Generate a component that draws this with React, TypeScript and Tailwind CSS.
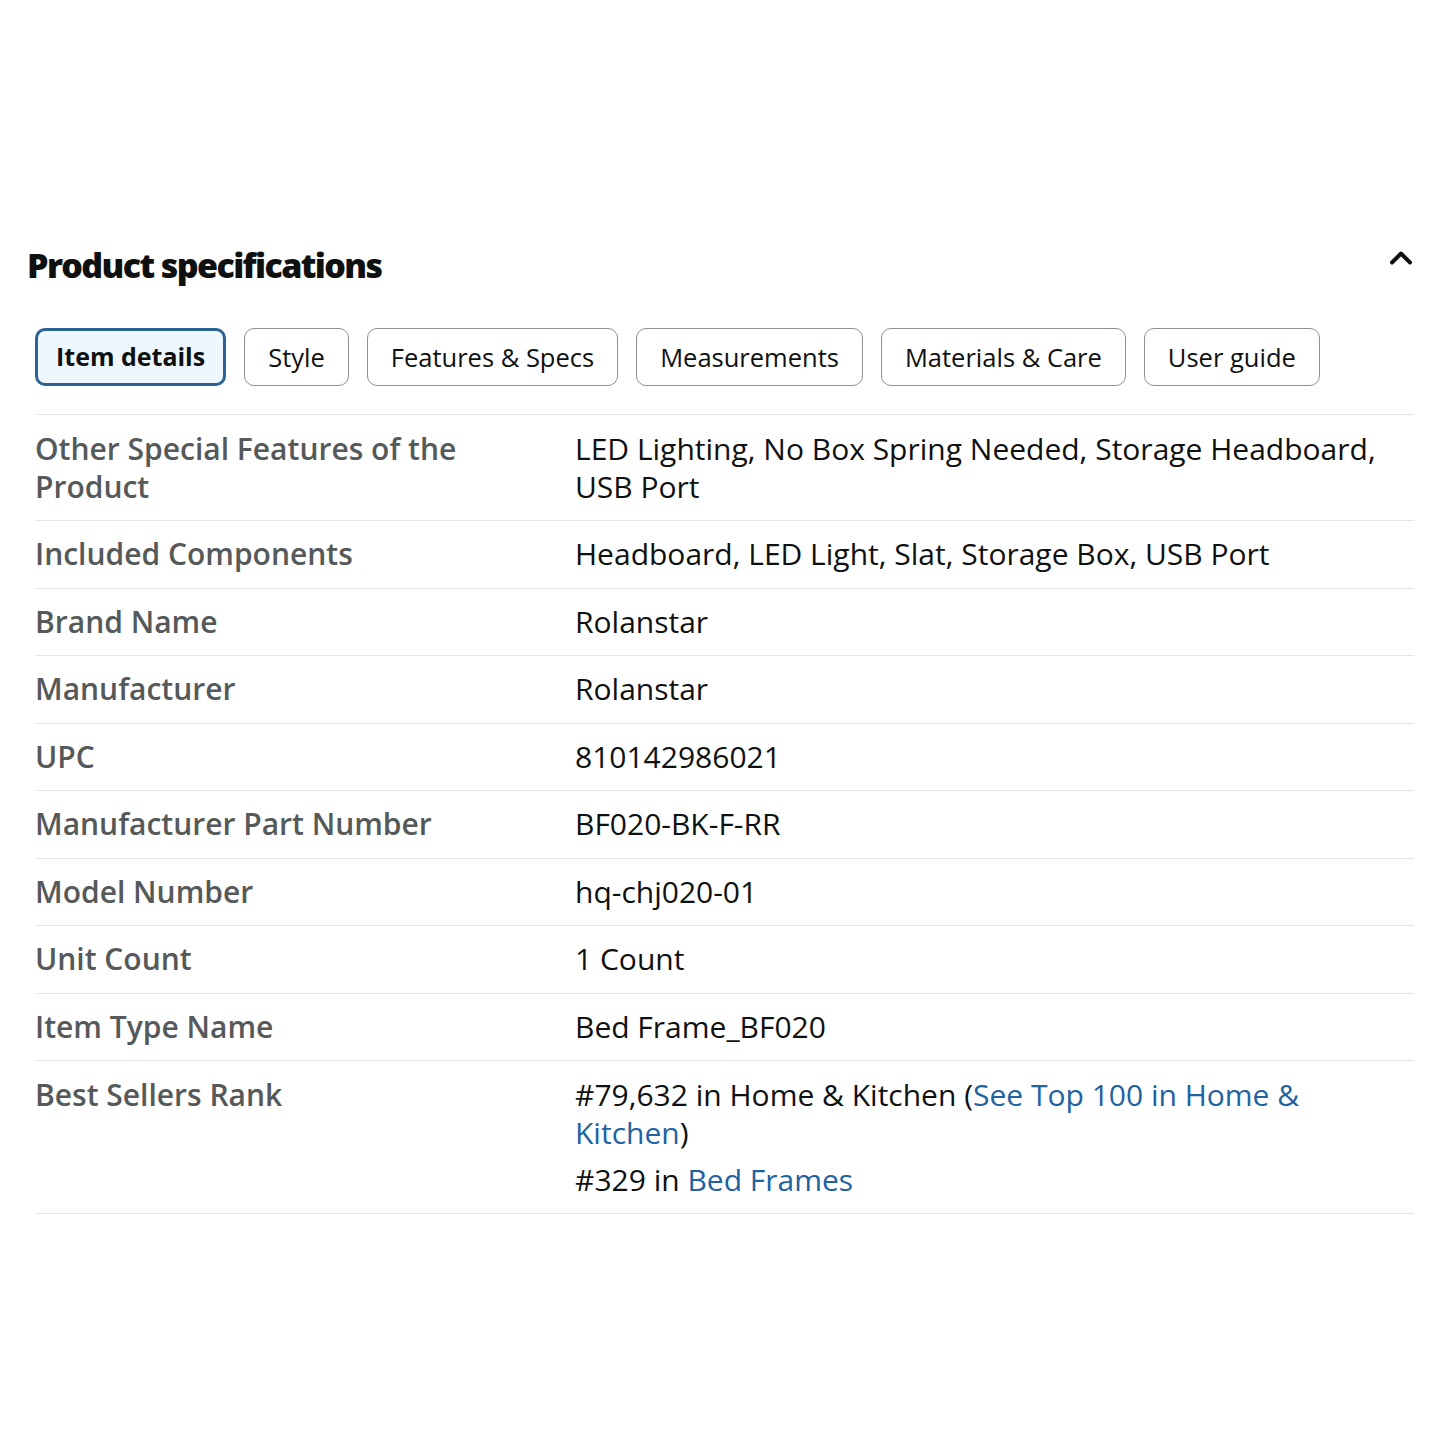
import { ChevronUp } from 'lucide-react'

const tabs = ['Item details', 'Style', 'Features & Specs', 'Measurements', 'Materials & Care', 'User guide']

const rows: { label: string; value: string }[] = [
  { label: 'Other Special Features of the Product', value: 'LED Lighting, No Box Spring Needed, Storage Headboard, USB Port' },
  { label: 'Included Components', value: 'Headboard, LED Light, Slat, Storage Box, USB Port' },
  { label: 'Brand Name', value: 'Rolanstar' },
  { label: 'Manufacturer', value: 'Rolanstar' },
  { label: 'UPC', value: '810142986021' },
  { label: 'Manufacturer Part Number', value: 'BF020-BK-F-RR' },
  { label: 'Model Number', value: 'hq-chj020-01' },
  { label: 'Unit Count', value: '1 Count' },
  { label: 'Item Type Name', value: 'Bed Frame_BF020' },
]

export default function App() {
  return (
    <div className="min-h-[1440px] bg-white pt-[240px] font-['Open_Sans',sans-serif] text-[#0f1111]">
      <div className="flex items-center justify-between pl-[27px] pr-[21px]">
        <h1 className="text-[34px] font-extrabold tracking-[-1.6px]">Product specifications</h1>
        <ChevronUp className="-mt-4 h-9 w-9" strokeWidth={2.6} />
      </div>

      <div className="mt-[37px] flex gap-[18px] pl-[35px]">
        {tabs.map((t, i) =>
          i === 0 ? (
            <div
              key={t}
              className="flex h-[58px] items-center rounded-[10px] border-[3px] border-[#2a6496] bg-[#edf7fd] px-[18px] text-[25px] font-bold"
            >
              {t}
            </div>
          ) : (
            <div
              key={t}
              className="flex h-[58px] items-center rounded-[10px] border border-[#8d9096] px-[23px] text-[25.5px]"
            >
              {t}
            </div>
          )
        )}
      </div>

      <div className="mx-[26px] ml-[35px] mt-[28px] border-t border-[#e3e6e6]">
        {rows.map((r, i) => (
          <div
            key={r.label}
            className={
              i === 0
                ? 'flex border-b border-[#e3e6e6] py-[14.5px] text-[30px] leading-[38px]'
                : 'flex border-b border-[#e3e6e6] py-[14.25px] text-[30px] leading-[38px]'
            }
          >
            <div className="w-[540px] shrink-0 pr-[60px] font-semibold text-[#565959]">{r.label}</div>
            <div className="flex-1">{r.value}</div>
          </div>
        ))}
        <div className="flex border-b border-[#e3e6e6] py-[14.5px] text-[30px] leading-[38px]">
          <div className="w-[540px] shrink-0 pr-[60px] font-semibold text-[#565959]">Best Sellers Rank</div>
          <div className="flex-1">
            <p>
              #79,632 in Home &amp; Kitchen (<span className="text-[#2162a1]">See Top 100 in Home &amp; Kitchen</span>)
            </p>
            <p className="mt-[9px]">
              #329 in <span className="text-[#2162a1]">Bed Frames</span>
            </p>
          </div>
        </div>
      </div>
    </div>
  )
}
